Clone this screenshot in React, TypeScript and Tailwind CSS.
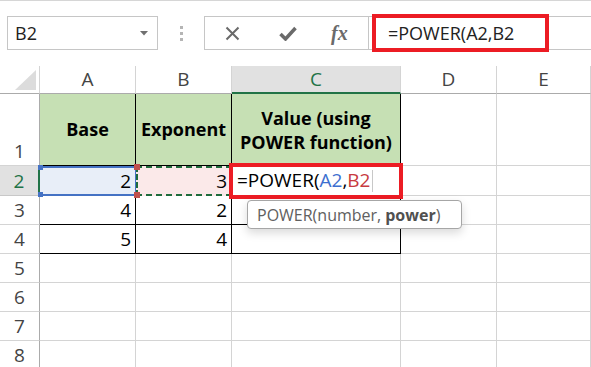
import React from 'react'

const cols = ['A', 'B', 'C', 'D', 'E']
const font = { fontFamily: '"Open Sans", "Liberation Sans", sans-serif' }

function RowHead({ n, selected }: { n: number; selected?: boolean }) {
  return (
    <div
      className={
        selected
          ? 'flex items-end justify-center border-r-2 border-b border-r-[#217346] border-b-[#c8c8c8] bg-[#e1e1e1] text-[19px] text-[#217346]'
          : 'flex items-end justify-center border-r border-b border-r-[#ababab] border-b-[#d4d4d4] text-[19px] text-[#444]'
      }
    >
      {n}
    </div>
  )
}

function Num({ v }: { v: number }) {
  return (
    <div className="flex items-center justify-end border-r border-b border-black pr-[4px] text-[19px] text-black">
      {v}
    </div>
  )
}

function Empty() {
  return <div className="border-r border-b border-[#d4d4d4]" />
}

export default function App() {
  return (
    <div className="relative h-[367px] w-[591px] overflow-hidden bg-white" style={font}>
      {/* formula bar */}
      <div className="h-[66px] border-t border-[#d6d6d6] pt-[15px]">
        <div className="flex h-[34px] items-stretch">
          <div className="ml-[7px] flex w-[151px] items-center justify-between border border-[#c6c6c6] pl-[7px] pr-[9px] text-[18px] text-[#222]">
            <span>B2</span>
            <svg width="8" height="5" viewBox="0 0 8 5">
              <path d="M0 0h8L4 4.5z" fill="#707070" />
            </svg>
          </div>
          <div className="flex w-[46px] flex-col items-center justify-center gap-[3px]">
            <span className="h-[3px] w-[3px] bg-[#b5b5b5]" />
            <span className="h-[3px] w-[3px] bg-[#b5b5b5]" />
            <span className="h-[3px] w-[3px] bg-[#b5b5b5]" />
          </div>
          <div className="flex w-[165px] items-center border border-[#c6c6c6]">
            <svg className="ml-[20px]" width="15" height="15" viewBox="0 0 15 15">
              <path d="M1.5 1.5l12 12M13.5 1.5l-12 12" stroke="#6a6a6a" strokeWidth="2" />
            </svg>
            <svg className="ml-[39px]" width="18" height="15" viewBox="0 0 18 15">
              <path d="M1.5 8l5 5L16.5 2" stroke="#6a6a6a" strokeWidth="3.5" fill="none" />
            </svg>
            <span
              className="ml-[34px] text-[20px] font-bold italic text-[#6a6a6a]"
              style={{ fontFamily: '"Liberation Serif", serif' }}
            >
              fx
            </span>
          </div>
          <div className="flex flex-1 items-center border-y border-[#c6c6c6] pl-[19px] text-[18px] text-[#222]">
            =POWER(A2,B2
          </div>
        </div>
      </div>

      {/* sheet */}
      <div className="grid grid-cols-[40px_96px_96px_169px_96px_1fr] grid-rows-[28px_72px_30px_29px_29px_29px_29px_29px_29px]">
        {/* header row */}
        <div className="relative border-r border-b border-r-[#d4d4d4] border-b-[#ababab]">
          <svg className="absolute left-[15px] top-[4px]" width="21" height="20" viewBox="0 0 21 20">
            <path d="M21 0V20H0z" fill="#dcdcdc" />
          </svg>
        </div>
        {cols.map((c) => (
          <div
            key={c}
            className={
              c === 'C'
                ? 'flex items-center justify-center border-r border-b-2 border-r-[#d4d4d4] border-b-[#217346] bg-[#e1e1e1] text-[19px] text-[#217346]'
                : 'flex items-center justify-center border-r border-b border-r-[#d4d4d4] border-b-[#ababab] text-[19px] text-[#444]'
            }
          >
            {c}
          </div>
        ))}

        {/* row 1 */}
        <RowHead n={1} />
        <div className="flex items-center justify-center border-r border-b border-black bg-[#c6e0b4] text-[18px] font-bold text-black">
          Base
        </div>
        <div className="flex items-center justify-center border-r border-b border-black bg-[#c6e0b4] text-[18px] font-bold text-black">
          Exponent
        </div>
        <div className="flex items-center justify-center border-r border-b border-black bg-[#c6e0b4] text-center text-[18px] font-bold leading-[24px] text-black">
          Value (using
          <br />
          POWER function)
        </div>
        <Empty />
        <Empty />

        {/* row 2 */}
        <RowHead n={2} selected />
        <div className="relative flex items-center justify-end border-y-2 border-r border-y-[#4472c4] border-r-[#4472c4] bg-[#e8eef8] pr-[4px] text-[19px] text-black">
          2
          <span className="absolute -left-[2px] -top-[3px] h-[5px] w-[5px] bg-[#4472c4]" />
          <span className="absolute -bottom-[3px] -left-[2px] h-[5px] w-[5px] bg-[#4472c4]" />
        </div>
        <div className="relative flex items-center justify-end border-2 border-dashed border-[#1e6b3c] bg-[#fbe9e9] pr-[3px] text-[19px] text-black">
          3
          <span className="absolute -left-[4px] -top-[4px] h-[6px] w-[6px] bg-[#c0504d]" />
          <span className="absolute -bottom-[4px] -left-[4px] h-[6px] w-[6px] bg-[#c0504d]" />
        </div>
        <div className="relative flex items-center border-r border-b border-black pl-[5px] text-[19px] text-black">
          <span>=POWER(</span>
          <span className="text-[#3d6fd0]">A2</span>
          <span>,</span>
          <span className="text-[#c83a40]">B2</span>
          <span className="ml-[2px] h-[22px] w-px bg-[#c8c8c8]" />
        </div>
        <Empty />
        <Empty />

        {/* rows 3-4 */}
        <RowHead n={3} />
        <Num v={4} />
        <Num v={2} />
        <div className="border-r border-b border-black" />
        <Empty />
        <Empty />

        <RowHead n={4} />
        <Num v={5} />
        <Num v={4} />
        <div className="border-r border-b border-black" />
        <Empty />
        <Empty />

        {[5, 6, 7, 8].map((n) => (
          <React.Fragment key={n}>
            <RowHead n={n} />
            <Empty />
            <Empty />
            <Empty />
            <Empty />
            <Empty />
          </React.Fragment>
        ))}
      </div>

      {/* red annotation boxes */}
      <div className="absolute left-[372px] top-[14px] h-[38px] w-[177px] border-4 border-[#ec1c24]" />
      <div className="absolute left-[229px] top-[163px] h-[36px] w-[174px] border-4 border-[#ec1c24]" />

      {/* function tooltip */}
      <div className="absolute left-[247px] top-[200px] flex h-[29px] w-[215px] items-center rounded-[4px] border border-[#a6a6a6] bg-white pl-[9px] text-[16px] text-[#606060] shadow-[0_4px_10px_rgba(0,0,0,0.15)]">
        POWER(number, <b className="ml-[4px] text-[#505050]">power</b>)
      </div>
    </div>
  )
}
